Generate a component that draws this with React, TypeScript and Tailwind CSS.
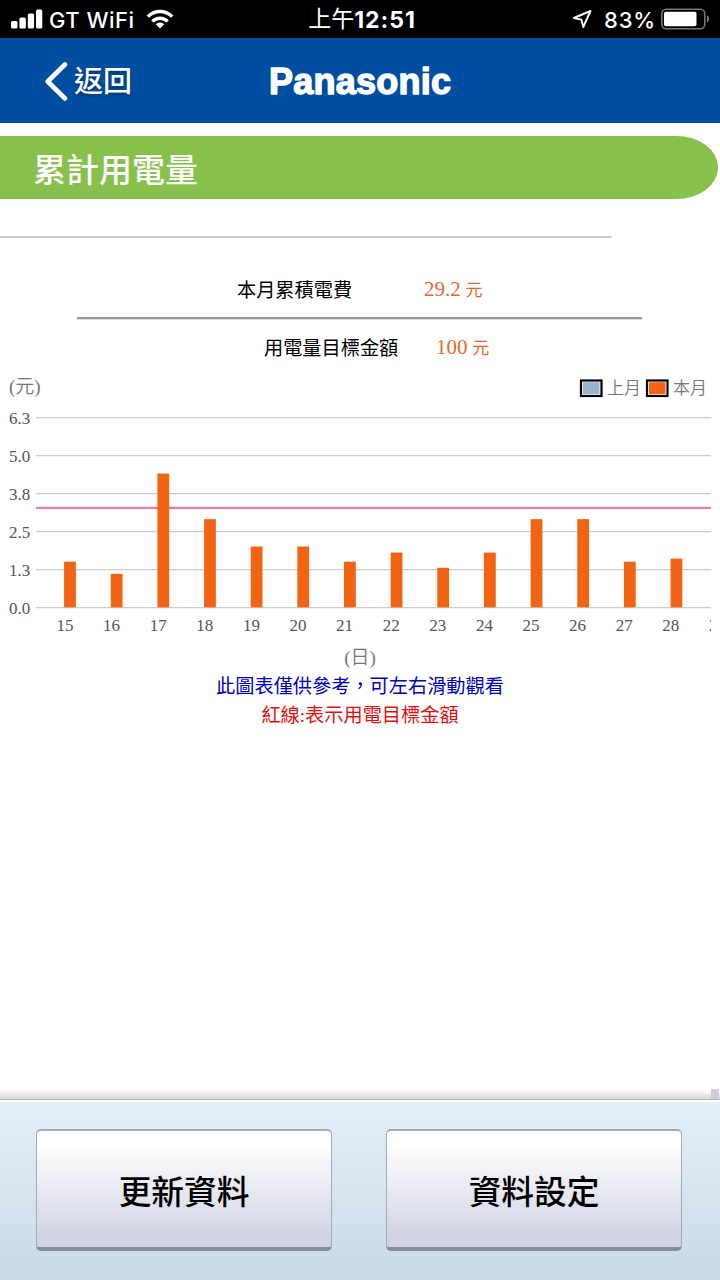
import React from 'react';

interface DayUsage {
  day: number;
  value: number;
}

const usage: DayUsage[] = [
  { day: 15, value: 1.5 },
  { day: 16, value: 1.1 },
  { day: 17, value: 4.4 },
  { day: 18, value: 2.9 },
  { day: 19, value: 2.0 },
  { day: 20, value: 2.0 },
  { day: 21, value: 1.5 },
  { day: 22, value: 1.8 },
  { day: 23, value: 1.3 },
  { day: 24, value: 1.8 },
  { day: 25, value: 2.9 },
  { day: 26, value: 2.9 },
  { day: 27, value: 1.5 },
  { day: 28, value: 1.6 },
  { day: 29, value: 0 },
];

const ticks = ['6.3', '5.0', '3.8', '2.5', '1.3', '0.0'];

const StatusBar: React.FC = () => (
  <div className="grid h-[38px] grid-cols-3 items-center bg-black px-[11px] font-['Inter','Noto_Sans_CJK_TC',sans-serif] text-[22px] leading-none text-white">
    <div className="flex items-center">
      <svg width="32" height="20" viewBox="0 0 32 20" fill="currentColor">
        <rect x="0" y="12" width="6.5" height="7.5" rx="1.6" />
        <rect x="8.4" y="8.5" width="6.5" height="11" rx="1.6" />
        <rect x="16.8" y="4.5" width="6.3" height="15" rx="1.6" />
        <rect x="25" y="0.5" width="6.3" height="19" rx="1.6" />
      </svg>
      <span className="mt-0.5 ml-1.5 whitespace-nowrap font-medium tracking-[0.5px]">GT WiFi</span>
      <svg className="ml-[11px]" width="28" height="20" viewBox="0 0 28 20" fill="none" stroke="currentColor" strokeWidth="3.4">
        <path d="M1.8 7.6C8.5 0.8 19.5 0.8 26.2 7.6" />
        <path d="M6.4 12.4C10.8 8.2 17.2 8.2 21.6 12.4" />
        <path d="M14 19.4L9.8 15.2C12 12.9 16 12.9 18.2 15.2Z" fill="currentColor" stroke="none" />
      </svg>
    </div>
    <div className="flex items-center justify-center whitespace-nowrap pl-1">
      <span className="text-[23px]">上午</span>
      <span className="mt-0.5 text-[23px] font-bold tracking-[1px]">12:51</span>
    </div>
    <div className="-mr-[3px] flex items-center justify-end">
      <svg width="20" height="20" viewBox="0 0 20 20" fill="none" stroke="currentColor" strokeWidth="1.9" strokeLinejoin="round">
        <path d="M18.5 2L1.8 9L9.4 10.6L11.3 18Z" />
      </svg>
      <span className="mt-0.5 ml-3 font-medium tracking-[0.8px]">83%</span>
      <svg className="ml-1" width="52" height="22" viewBox="0 0 52 22">
        <rect x="1.8" y="1.3" width="43" height="19.4" rx="4.5" fill="none" stroke="#777" strokeWidth="1.6" />
        <rect x="4" y="3.8" width="32.5" height="14.4" rx="1.8" fill="#fff" />
        <path d="M47 7.3C49.8 8.8 49.8 13.2 47 14.7Z" fill="#777" />
      </svg>
    </div>
  </div>
);

const Header: React.FC = () => (
  <header className="grid h-[85px] grid-cols-3 items-center bg-[#004ea1] text-white">
    <button className="flex items-center pl-[44px] text-left">
      <svg width="26" height="40" viewBox="0 0 26 40" fill="none" stroke="currentColor" strokeWidth="4.6" strokeLinecap="round" strokeLinejoin="round">
        <path d="M21 3.5L3.7 20.5L21 37.5" />
      </svg>
      <span className="mt-1 ml-1 whitespace-nowrap text-[29px] font-medium leading-none [text-shadow:0_2px_3px_rgba(0,0,0,0.35)]">返回</span>
    </button>
    <svg className="overflow-visible" width="240" height="85">
      <text
        x="29"
        y="55.5"
        textLength="182"
        fill="#fff"
        stroke="#fff"
        strokeWidth="1.4"
        strokeLinejoin="round"
        className="font-['Liberation_Sans',Arial,sans-serif] text-[36px] font-bold"
      >
        Panasonic
      </text>
    </svg>
  </header>
);

// 每日電費長條圖
const UsageChart: React.FC = () => {
  const baseline = 237.3;
  const unit = 30.4;

  return (
    <svg className="block font-['Liberation_Serif','Noto_Sans_CJK_TC',serif] text-[17px]" width="711" height="300" viewBox="0 0 711 300">
      <text x="9" y="23" fill="#777" className="text-[19px] font-[350]">(元)</text>

      {/* 圖例 */}
      <rect x="581" y="10.5" width="20.5" height="15.5" fill="#fff" stroke="#000" strokeWidth="2.2" />
      <rect x="583" y="12.2" width="16.5" height="12" fill="#9ab4cf" />
      <text x="607" y="23.5" fill="#777" className="text-[17px] font-[350]">上月</text>
      <rect x="647" y="10.5" width="20.5" height="15.5" fill="#fff" stroke="#000" strokeWidth="2.2" />
      <rect x="649" y="12.2" width="16.5" height="12" fill="#f26413" />
      <text x="673" y="23.5" fill="#777" className="text-[17px] font-[350]">本月</text>

      {ticks.map((tick, i) => (
        <g key={tick}>
          <line x1="36" x2="711" y1={47.7 + i * 38} y2={47.7 + i * 38} stroke="#ccc" strokeWidth="1.3" />
          <text x="9" y={54 + i * 38} fill="#555">{tick}</text>
        </g>
      ))}

      {/* 目標金額 */}
      <line x1="36" x2="711" y1="137.9" y2="137.9" stroke="#e07f9f" strokeWidth="2.4" />

      {usage.map(({ day, value }, i) => (
        <g key={day}>
          <rect x={64.1 + i * 46.65} y={baseline - value * unit} width="11.8" height={value * unit} fill="#f26413" />
          <text x={65 + i * 46.6} y="261" textAnchor="middle" fill="#555">{day}</text>
        </g>
      ))}

      <text x="360" y="293.5" textAnchor="middle" fill="#777" className="text-[19px] font-[350]">(日)</text>
    </svg>
  );
};

const ActionButton: React.FC<{ label: string }> = ({ label }) => (
  <button className="h-[122px] w-[296px] rounded-[5px] border border-t-2 border-b-4 border-[#a3a9b5] border-b-[#858b9c] bg-linear-to-b from-white from-10% to-[#d2d4e5] to-90% pt-[9px] text-[32.7px] font-medium leading-none text-black">
    {label}
  </button>
);

export default function App() {
  return (
    <div className="flex h-[1280px] w-[720px] flex-col overflow-hidden bg-white font-['Liberation_Serif','Noto_Sans_CJK_TC',sans-serif]">
      <StatusBar />
      <Header />

      <main className="flex flex-1 flex-col">
        <h1 className="mt-[13px] flex h-[63px] w-[718px] items-center bg-[#87c04b] pt-2 pl-[33px] text-[33px] font-medium leading-none text-white [border-bottom-right-radius:42px_31px] [border-top-right-radius:42px_31px]">
          累計用電量
        </h1>
        <div className="mt-[36px] h-[3px] w-[612px] rounded-br-[2px] border-b-2 border-[#c9c9c9]" />

        <div className="mt-[33px] flex h-[40px] items-center pl-[237px] text-[19.2px]">
          <span className="w-[187px] text-black">本月累積電費</span>
          <span className="-mt-[3px] text-[#e0692f]">
            <span className="text-[21px]">29.2</span> <span className="text-[17px]">元</span>
          </span>
        </div>
        <div className="mt-[6px] ml-[77px] h-[3px] w-[565px] border-t-2 border-b border-t-[#999] border-b-[#ddd]" />
        <div className="mt-[9px] flex h-[40px] items-center pl-[264px] text-[19.2px]">
          <span className="w-[172px] text-black">用電量目標金額</span>
          <span className="-mt-[3px] text-[#e0692f]">
            <span className="text-[21px]">100</span> <span className="text-[17px]">元</span>
          </span>
        </div>

        <div className="mt-px">
          <UsageChart />
        </div>
        <p className="mt-0.5 text-center text-[19.2px] leading-[29px] text-[#0000c0]">此圖表僅供參考，可左右滑動觀看</p>
        <p className="text-center text-[19.2px] leading-[29px] text-[#e01010]">紅線:表示用電目標金額</p>
      </main>

      <div className="flex h-[10px] items-stretch justify-end bg-linear-to-b from-white to-[#d9d9d9]">
        <div className="mr-px w-2 bg-[#cdced8]" />
      </div>
      <footer className="flex h-[181px] justify-between border-t border-[#b5b5b5] bg-linear-to-b from-[#e5eff7] to-[#c8dae8] pt-[29px] pr-[38px] pl-[36px] shadow-[inset_0_2px_0_#fff]">
        <ActionButton label="更新資料" />
        <ActionButton label="資料設定" />
      </footer>
    </div>
  );
}
